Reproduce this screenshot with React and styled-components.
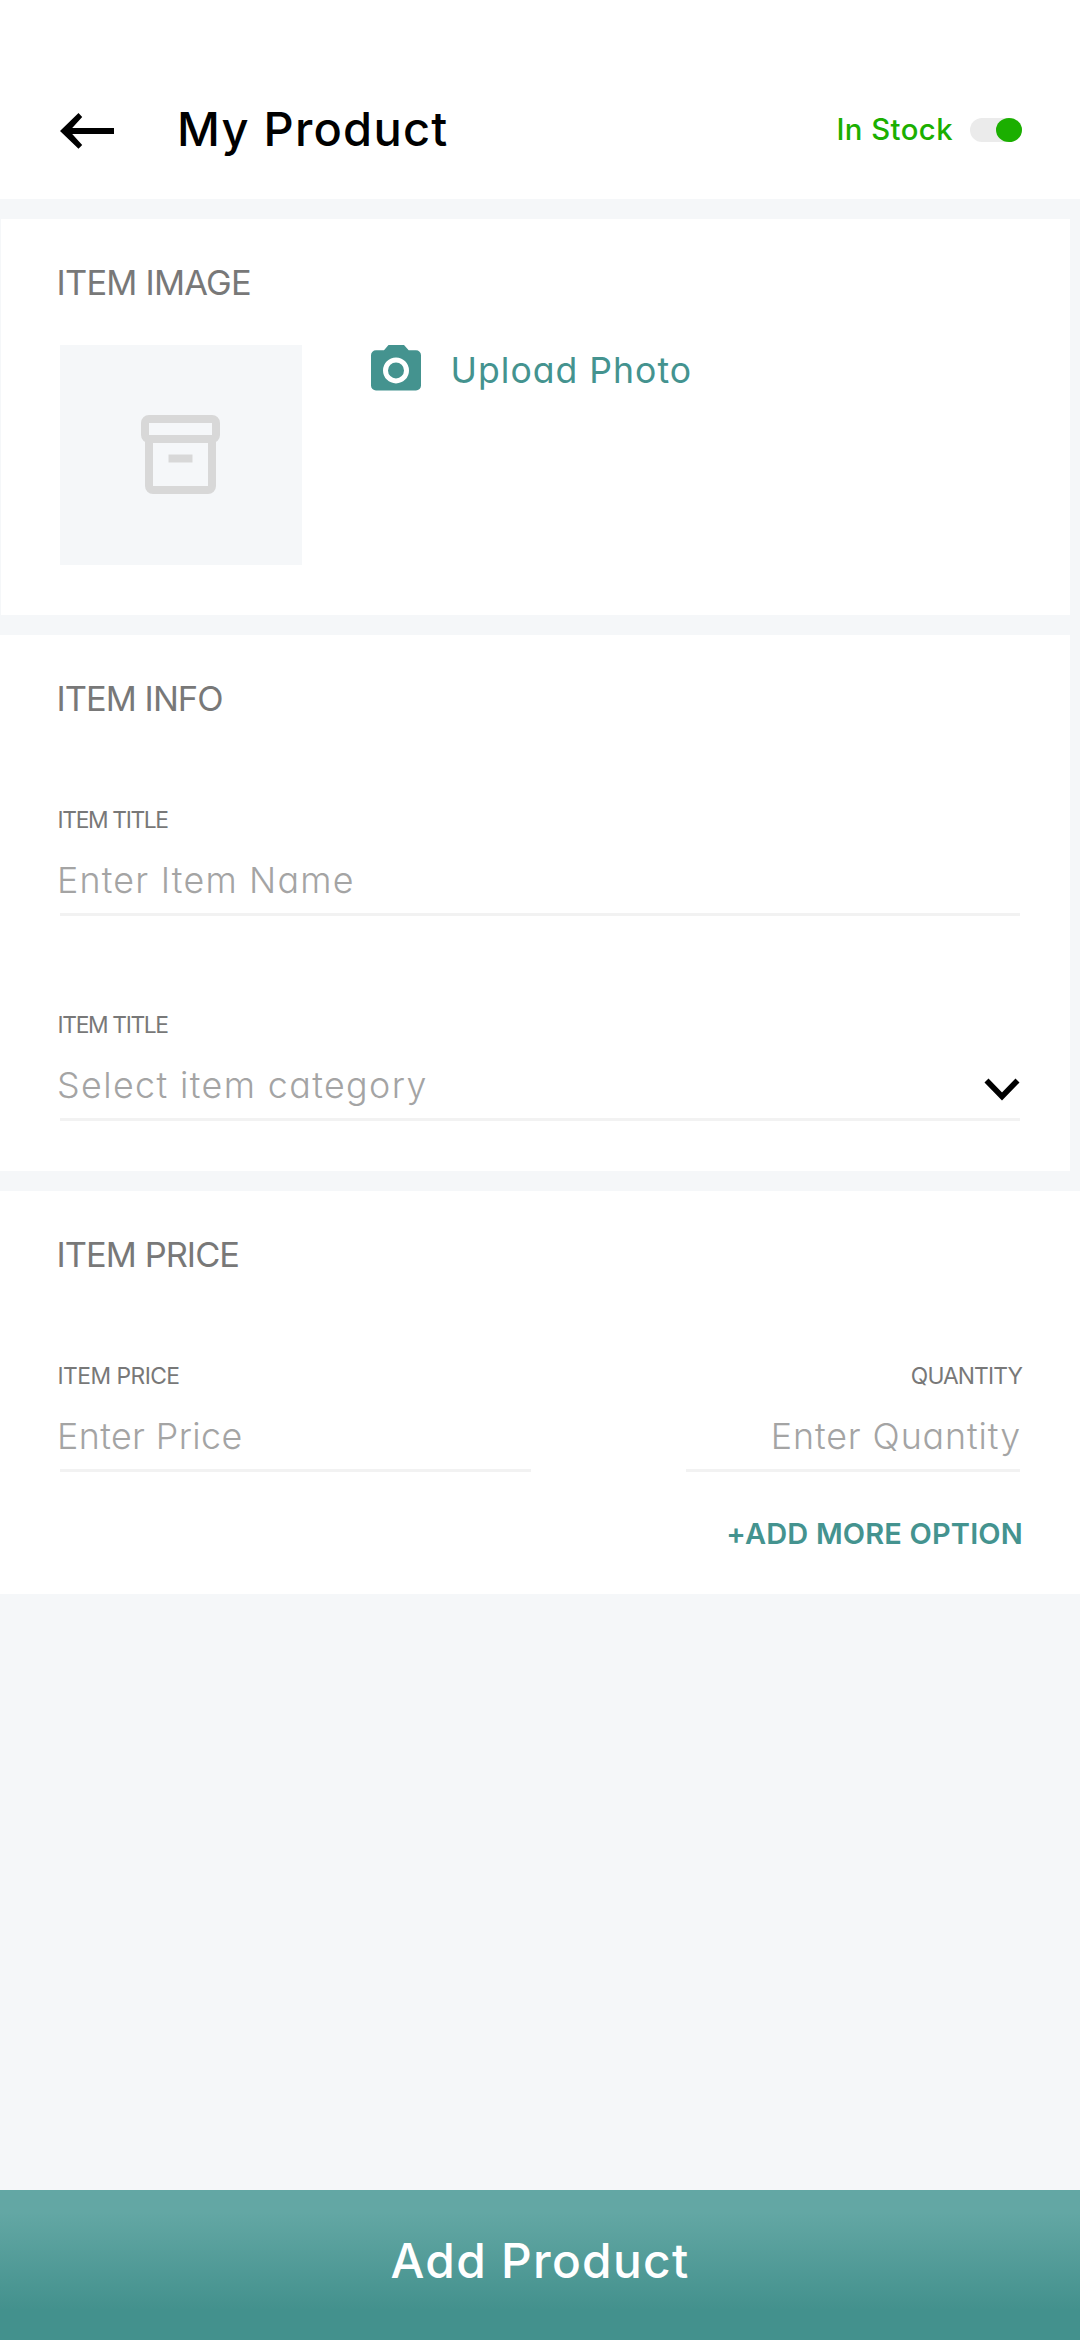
import styled, { createGlobalStyle } from 'styled-components';

// Colors
const colorTeal = '#44938f';
const colorGreen = '#1baf00';
const colorGrey = '#787878';
const colorLightGrey = '#a4a4a4';
const colorBackground = '#f5f7f9';

const GlobalStyle = createGlobalStyle`
  body {
    margin: 0;
    background-color: ${colorBackground};
    font-family: Inter, 'Open Sans', sans-serif;
    font-feature-settings: 'cv11' 1;
  }
`;

const Screen = styled.div`
  display: flex;
  flex-direction: column;
  width: 1080px;
  height: 2340px;
  background-color: ${colorBackground};
`;

const Header = styled.header`
  display: flex;
  align-items: center;
  box-sizing: border-box;
  height: 199px;
  padding: 60px 58px 0 60px;
  background-color: white;
`;

const BackButton = styled.button`
  display: flex;
  margin-top: 3px;
  padding: 0;
  border: none;
  background-color: transparent;
`;

const Title = styled.h1`
  flex: 1;
  margin: 0 0 2px 63px;
  font-size: 47px;
  font-weight: 500;
  line-height: 60px;
  letter-spacing: 1.25px;
`;

const StockLabel = styled.span`
  font-size: 29.3px;
  font-weight: 500;
  line-height: 40px;
  letter-spacing: 0.45px;
  color: ${colorGreen};
`;

const Toggle = styled.div`
  display: flex;
  justify-content: flex-end;
  width: 52px;
  height: 24px;
  margin-left: 17px;
  border-radius: 12px;
  background-color: #ebebeb;
`;

const ToggleKnob = styled.div`
  width: 26px;
  height: 24px;
  border-radius: 50%;
  background-color: ${colorGreen};
`;

const Section = styled.section`
  margin: 20px ${(props) => props.$right || 0}px 0 ${(props) => props.$left || 0}px;
  padding: 42px ${(props) => 60 - (props.$right || 0)}px
    ${(props) => props.$bottom || 50}px ${(props) => 60 - (props.$left || 0)}px;
  background-color: white;
`;

const SectionTitle = styled.h2`
  margin: 0 0 0 -3.500px;
  font-size: 34.4px;
  font-weight: 400;
  line-height: 43px;
  letter-spacing: ${(props) => props.$spacing}px;
  color: ${colorGrey};
`;

const ImageRow = styled.div`
  display: flex;
  align-items: flex-start;
  margin-top: 41px;
`;

const ImagePlaceholder = styled.div`
  display: flex;
  align-items: center;
  justify-content: center;
  box-sizing: border-box;
  width: 242px;
  height: 220px;
  padding: 0 1px 1px 0;
  background-color: ${colorBackground};
`;

const UploadButton = styled.button`
  display: flex;
  align-items: flex-start;
  gap: 29.5px;
  margin-left: 69px;
  padding: 0;
  border: none;
  background-color: transparent;
  font-family: inherit;
  font-feature-settings: inherit;
  font-size: 35.6px;
  line-height: 51px;
  letter-spacing: 1px;
  color: ${colorTeal};
`;

const Field = styled.div`
  display: flex;
  flex-direction: column;
  align-items: ${(props) => (props.$alignRight ? 'flex-end' : 'flex-start')};
  box-sizing: border-box;
  width: ${(props) => props.$width || 960}px;
  height: 111px;
  margin-top: ${(props) => props.$top || 0}px;
  border-bottom: 3px solid #f2f2f2;
`;

const Label = styled.label`
  margin: 0 -2px 0 -2.500px;
  font-size: 22.8px;
  line-height: 30px;
  letter-spacing: ${(props) => props.$spacing}px;
  color: ${colorGrey};
`;

const ValueRow = styled.div`
  display: flex;
  align-items: center;
  justify-content: space-between;
  width: 100%;
  height: 41px;
  margin-top: 25px;

  svg {
    margin-top: 8px;
  }
`;

const Value = styled.span`
  margin: 0 -1px 0 -3px;
  ${(props) => props.$alignRight && 'margin-left: auto;'}
  font-size: 35.8px;
  font-weight: 300;
  line-height: 41px;
  letter-spacing: ${(props) => props.$spacing}px;
  color: ${colorLightGrey};
`;

const PriceRow = styled.div`
  display: flex;
  justify-content: space-between;
`;

const AddOptionButton = styled.button`
  display: block;
  margin: 41px -3px 0 auto;
  padding: 0;
  border: none;
  background-color: transparent;
  font-family: inherit;
  font-size: 29px;
  font-weight: 600;
  line-height: 41px;
  letter-spacing: 0.16px;
  color: ${colorTeal};
`;

const SubmitButton = styled.button`
  height: 150px;
  margin-top: auto;
  padding: 0 0 8px;
  border: none;
  background: linear-gradient(#63a7a4 15%, #43918d 80%);
  font-family: inherit;
  font-size: 47.8px;
  font-weight: 500;
  line-height: 60px;
  letter-spacing: 1.3px;
  color: white;
`;

const ArrowIcon = () => (
  <svg width="54" height="36" viewBox="0 0 54 36">
    <path d="M54 15v6H12.2l10 11-3.700 3.700L0 18 18.500 0l3.700 4-10 11z" />
  </svg>
);

const BoxIcon = () => (
  <svg width="79" height="79" viewBox="0 0 79 79">
    <g fill="none" stroke="#d8d8d8" strokeWidth="8">
      <rect x="4" y="4" width="71" height="20" rx="4" />
      <path d="M8 24v47a4 4 0 0 0 4 4h55a4 4 0 0 0 4-4V24" />
      <path d="M27.500 43.500h24" />
    </g>
  </svg>
);

const CameraIcon = () => (
  <svg width="50" height="46" viewBox="0 0 50 46">
    <path
      fill={colorTeal}
      d="M17.500 0h15.500l4.700 5.300H45a5 5 0 0 1 5 5V40.500a5 5 0 0 1-5 5H5a5 5 0 0 1-5-5V10.300a5 5 0 0 1 5-5h8z"
    />
    <circle cx="25" cy="25.400" r="10.500" fill="none" stroke="white" strokeWidth="5" />
  </svg>
);

const ChevronIcon = () => (
  <svg width="36" height="23" viewBox="0 0 36 23">
    <path fill="none" stroke="black" strokeWidth="5.600" d="M2.500 2.500L18 18.500 33.500 2.500" />
  </svg>
);

export default function App() {
  return (
    <>
      <GlobalStyle />
      <Screen>
        <Header>
          <BackButton aria-label="Back">
            <ArrowIcon />
          </BackButton>
          <Title>My Product</Title>
          <StockLabel>In Stock</StockLabel>
          <Toggle>
            <ToggleKnob />
          </Toggle>
        </Header>

        <Section $left={1} $right={10}>
          <SectionTitle $spacing={-0.77}>ITEM IMAGE</SectionTitle>
          <ImageRow>
            <ImagePlaceholder>
              <BoxIcon />
            </ImagePlaceholder>
            <UploadButton>
              <CameraIcon />
              Upload Photo
            </UploadButton>
          </ImageRow>
        </Section>

        <Section $right={10}>
          <SectionTitle $spacing={-0.95}>ITEM INFO</SectionTitle>
          <Field $top={85}>
            <Label $spacing={-1.35}>ITEM TITLE</Label>
            <ValueRow>
              <Value $spacing={1.2}>Enter Item Name</Value>
            </ValueRow>
          </Field>
          <Field $top={94}>
            <Label $spacing={-1.35}>ITEM TITLE</Label>
            <ValueRow>
              <Value $spacing={1.4}>Select item category</Value>
              <ChevronIcon />
            </ValueRow>
          </Field>
        </Section>

        <Section $bottom={40}>
          <SectionTitle $spacing={-0.94}>ITEM PRICE</SectionTitle>
          <PriceRow>
            <Field $top={85} $width={471}>
              <Label $spacing={-0.52}>ITEM PRICE</Label>
              <ValueRow>
                <Value $spacing={0.4}>Enter Price</Value>
              </ValueRow>
            </Field>
            <Field $top={85} $width={334} $alignRight>
              <Label $spacing={-0.9}>QUANTITY</Label>
              <ValueRow>
                <Value $spacing={0.9} $alignRight>
                  Enter Quantity
                </Value>
              </ValueRow>
            </Field>
          </PriceRow>
          <AddOptionButton>+ADD MORE OPTION</AddOptionButton>
        </Section>

        <SubmitButton>Add Product</SubmitButton>
      </Screen>
    </>
  );
}
